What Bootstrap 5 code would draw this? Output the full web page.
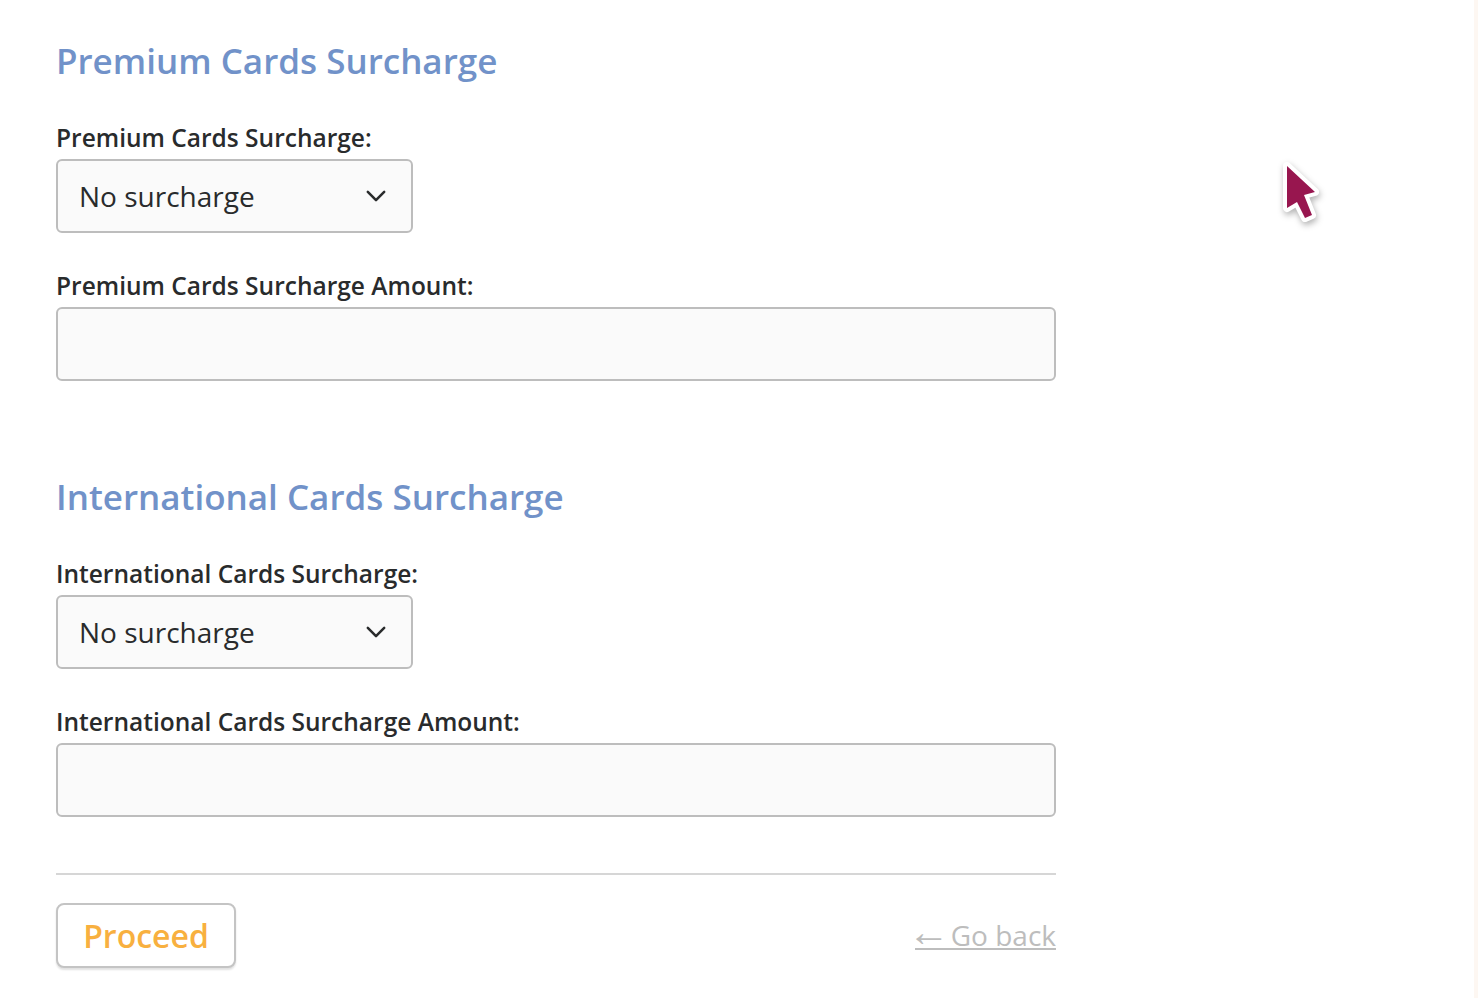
<!DOCTYPE html>
<html lang="en">

<head>
  <meta charset="UTF-8">
  <meta name="viewport" content="width=device-width, initial-scale=1.0">
  <title>Surcharge Settings</title>
  <link href="https://cdn.jsdelivr.net/npm/bootstrap@5.3.0/dist/css/bootstrap.min.css" rel="stylesheet">
  <style>
    html, body { height: 100%; }
    body {
      font-family: "Open Sans", sans-serif;
      color: #292b2c;
      background: #fff;
      overflow: hidden;
    }
    .page-strip {
      position: fixed;
      top: 0;
      right: 0;
      bottom: 0;
      width: 4px;
      background: #fdf7f2;
    }
    .surcharge-form {
      width: 1000px;
      margin-left: 56px;
      padding-top: 38px;
    }
    .section-title {
      font-size: 35px;
      line-height: 46px;
      font-weight: 600;
      color: #7192c9;
      margin-bottom: 38px;
    }
    .field-label {
      display: block;
      font-size: 24.5px;
      line-height: 32px;
      font-weight: 600;
      margin-bottom: 5px;
    }
    .surcharge-select, .surcharge-input {
      display: block;
      height: 74px;
      background-color: #fafafa;
      border: 2px solid #bdbdbd;
      border-radius: 6px;
      font-size: 28px;
      color: #292b2c;
    }
    .surcharge-select {
      width: 357px;
      padding: 0 50px 0 21px;
      appearance: none;
      background-image: url("data:image/svg+xml,%3csvg xmlns='http://www.w3.org/2000/svg' viewBox='0 0 22 14'%3e%3cpath fill='none' stroke='%23292b2c' stroke-width='2.8' stroke-linecap='round' stroke-linejoin='round' d='M2 2l9 9 9-9'/%3e%3c/svg%3e");
      background-repeat: no-repeat;
      background-position: right 25px center;
      background-size: 20px 13px;
    }
    .surcharge-input { width: 100%; padding: 0 22px; }
    .field-block { margin-bottom: 37px; }
    .section-gap { margin-top: 93px; }
    .form-rule {
      border: 0;
      border-top: 2px solid #d6d6d6;
      opacity: 1;
      margin: 56px 0 28px;
    }
    .proceed-btn {
      width: 180px;
      height: 65px;
      background: #fff;
      border: 2px solid #c4c4c4;
      border-radius: 8px;
      box-shadow: 0 2px 2px rgba(0, 0, 0, .12);
      color: #f8b03f;
      font-size: 32px;
      font-weight: 600;
      line-height: 1;
      padding: 0;
    }
    .back-link {
      display: inline-block;
      margin-top: 2px;
      font-size: 28px;
      line-height: 25px;
      color: #bdbdbd;
      text-decoration: none;
      border-bottom: 2px solid #bdbdbd;
    }
    .back-arrow {
      font-family: "Liberation Sans", sans-serif;
      font-size: 42px;
      line-height: 0;
      letter-spacing: -6px;
      margin-left: -8px;
    }
    .cursor-mark {
      position: absolute;
      left: 1276px;
      top: 155px;
      width: 52px;
      height: 76px;
      filter: drop-shadow(1px 3px 3px rgba(0, 0, 0, .3));
    }
  </style>
</head>

<body>
  <form class="surcharge-form">
    <h2 class="section-title">Premium Cards Surcharge</h2>
    <div class="field-block">
      <label class="field-label" for="premiumSurcharge">Premium Cards Surcharge:</label>
      <select id="premiumSurcharge" class="surcharge-select">
        <option>No surcharge</option>
      </select>
    </div>
    <div>
      <label class="field-label" for="premiumAmount">Premium Cards Surcharge Amount:</label>
      <input type="text" id="premiumAmount" class="surcharge-input">
    </div>

    <h2 class="section-title section-gap">International Cards Surcharge</h2>
    <div class="field-block">
      <label class="field-label" for="intlSurcharge">International Cards Surcharge:</label>
      <select id="intlSurcharge" class="surcharge-select">
        <option>No surcharge</option>
      </select>
    </div>
    <div>
      <label class="field-label" for="intlAmount">International Cards Surcharge Amount:</label>
      <input type="text" id="intlAmount" class="surcharge-input">
    </div>

    <hr class="form-rule">
    <div class="d-flex justify-content-between align-items-center">
      <button type="button" class="btn proceed-btn">Proceed</button>
      <a href="#" class="back-link"><span class="back-arrow">←</span> Go back</a>
    </div>
  </form>

  <div class="page-strip"></div>

  <!-- mouse pointer over the page -->
  <svg class="cursor-mark" viewBox="0 0 52 76">
    <path d="M11 11 L39 37 L28 40 L36 60 L29 63 L21 47 L11 53 Z" fill="#98164f" stroke="#fff" stroke-width="8" stroke-linejoin="round" paint-order="stroke"/>
  </svg>

  <script src="https://cdn.jsdelivr.net/npm/bootstrap@5.3.0/dist/js/bootstrap.bundle.min.js"></script>
</body>

</html>
